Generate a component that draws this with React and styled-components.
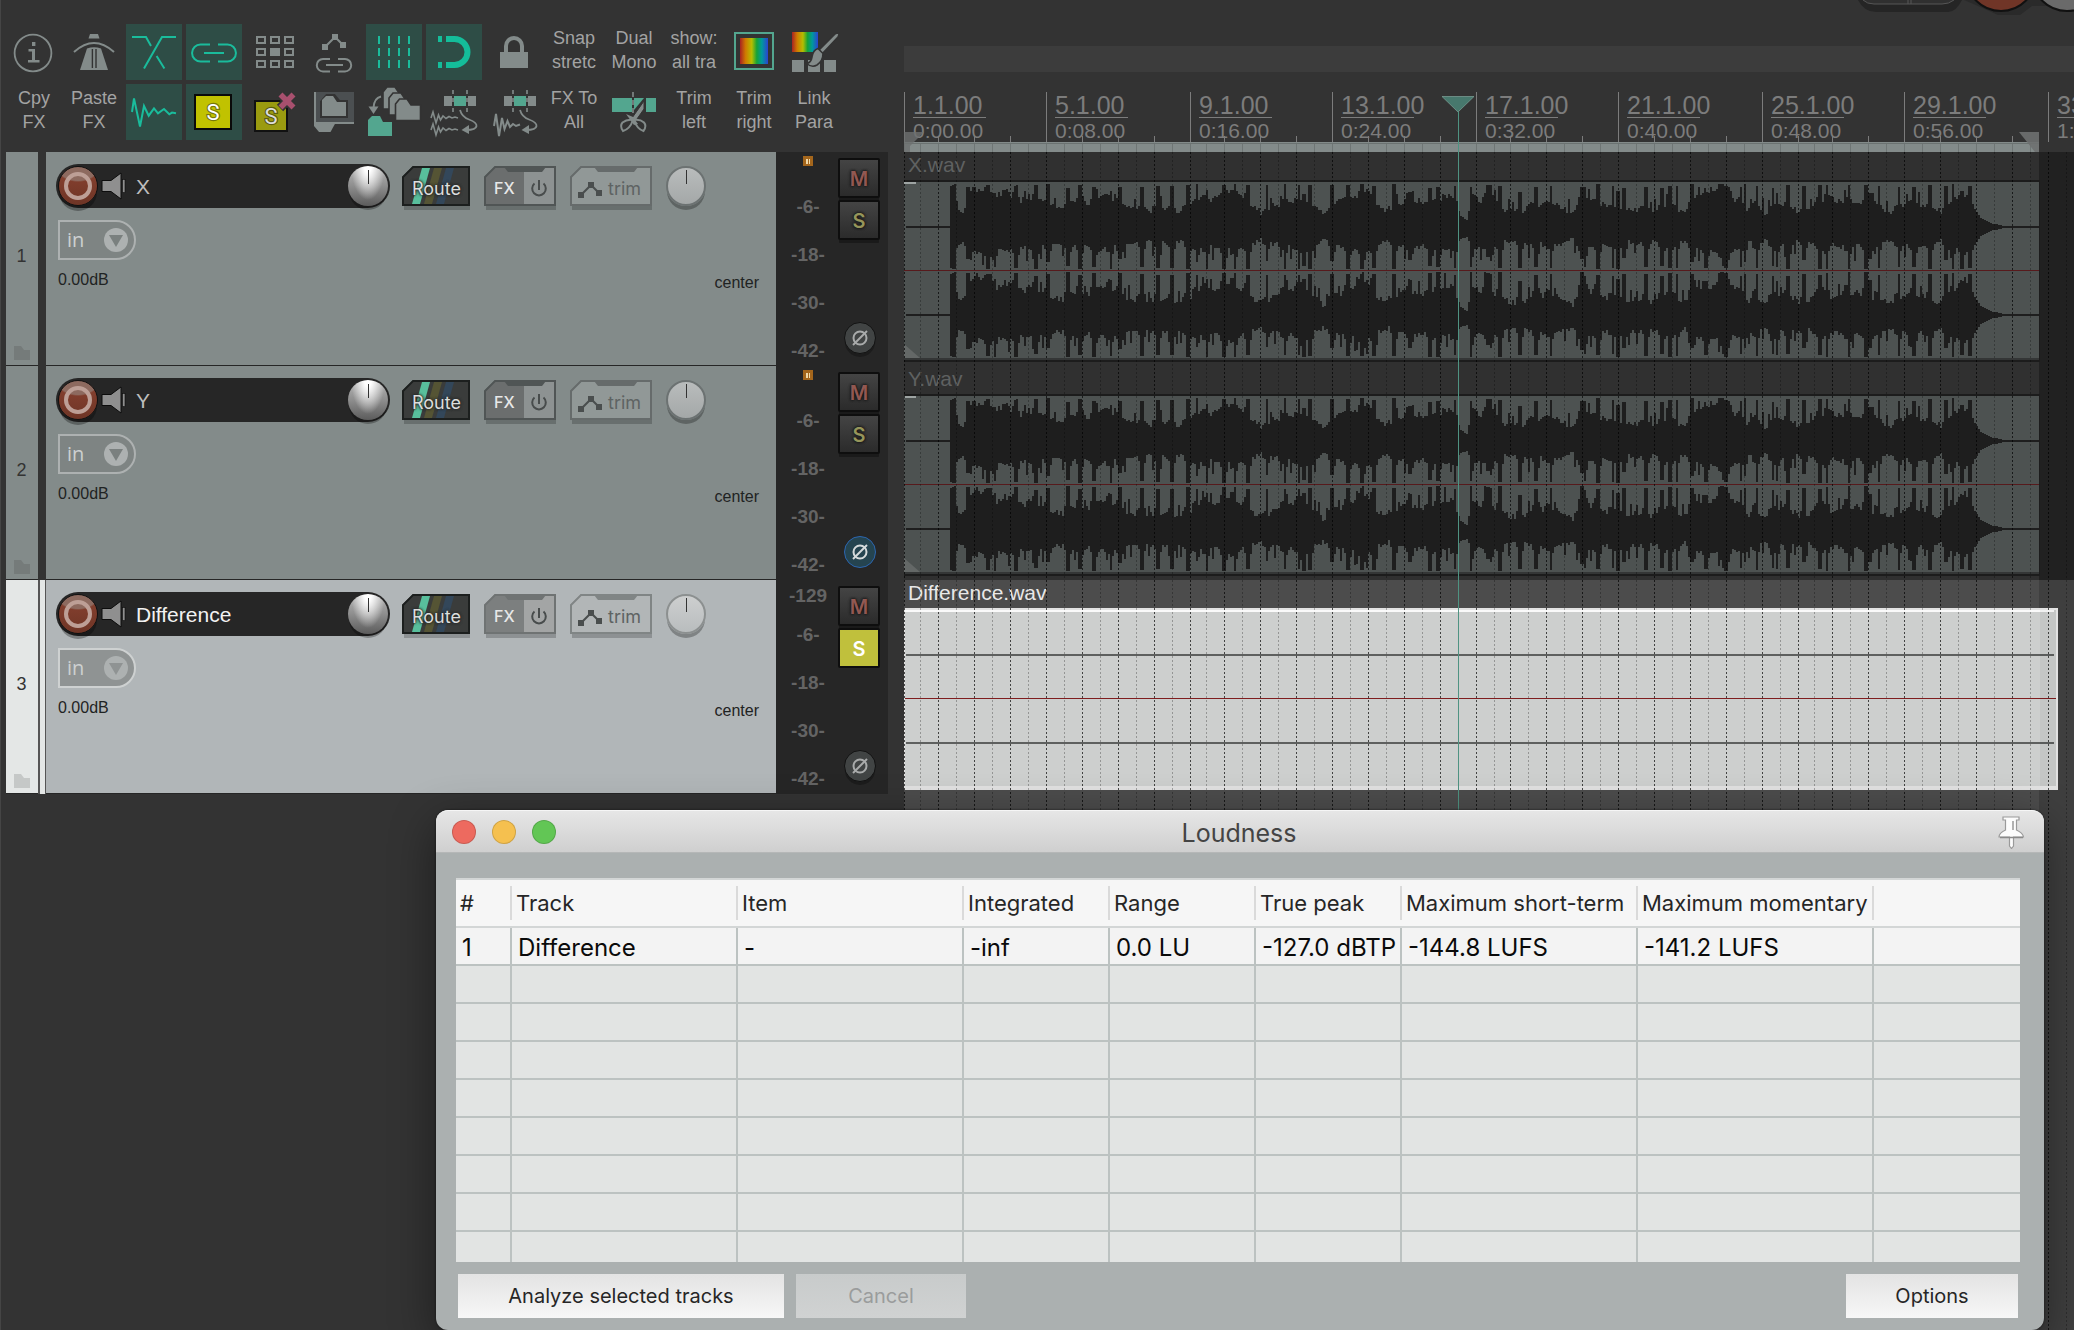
import React from "react";
import styled, { createGlobalStyle, css } from "styled-components";

const GlobalStyle = createGlobalStyle`
  * { box-sizing: border-box; }
  body { margin: 0; background: #333; }
  button, input, select { font: inherit; margin: 0; padding: 0; border: 0; background: none; color: inherit; }
  svg { display: block; }
`;

const SANS = `"Liberation Sans", Arial, sans-serif`;
const UI = `Inter, Roboto, sans-serif`;
const GRAY = "#838b8a";
const GREEN = "#53a68f";
const TEAL = "#1abc9c";
const BEAT = 17.88;
const LOOP_END = 1135;

/* ---------- shell ---------- */

const Page = styled.div`
  position: relative;
  display: flex;
  min-height: 100vh;
  overflow: hidden;
  background: #333;
  border-left: 1px solid #454545;
  font-family: ${SANS};
`;

const ControlPane = styled.div`
  flex: none;
  width: 903px;
`;

const ArrangePane = styled.div`
  position: relative;
  flex: 1;
  min-width: 0;
  display: flex;
  flex-direction: column;
  overflow: hidden;
`;

/* ---------- toolbar ---------- */

const Toolbar = styled.div`
  display: grid;
  grid-template-columns: repeat(14, 56px);
  gap: 4px;
  height: 152px;
  padding: 24px 0 0 5px;
  align-content: start;
`;

const ToolButton = styled.button`
  height: 56px;
  background: ${(p) => (p.$on ? "#2e4d46" : "transparent")};
  color: #a3a3a3;
  font-size: 18px;
  line-height: 24px;
  text-align: center;
  white-space: pre;
  ${(p) => p.$text && css`padding-bottom: 4px;`}
`;

const Icon = ({ children }) => (
  <svg width="56" height="56" viewBox="0 0 56 56" fill="none" stroke={GRAY} strokeWidth="2">
    {children}
  </svg>
);

const Rainbow = ({ id }) => (
  <linearGradient id={id}>
    <stop offset="0" stopColor="#a82222" />
    <stop offset=".2" stopColor="#cf7a00" />
    <stop offset=".42" stopColor="#b5bd00" />
    <stop offset=".6" stopColor="#14a238" />
    <stop offset=".78" stopColor="#009a9c" />
    <stop offset="1" stopColor="#2b43d0" />
  </linearGradient>
);

const InfoIcon = () => (
  <Icon>
    <circle cx="27" cy="29" r="18.4" strokeWidth="1.8" />
    <g fill={GRAY} stroke="none">
      <rect x="26" y="18" width="3.4" height="4" />
      <path d="M22.5 25H29V36H33.5V38.4H22V36H26V27.4H22.5Z" />
    </g>
  </Icon>
);
const MetronomeIcon = () => (
  <Icon>
    <path d="M24 10h8l1.5 4.4h-11Z" fill={GRAY} stroke="none" />
    <path d="M8 28Q28 10 48 28" />
    <path d="M21 24.5Q28 22 35 24.5L42 46H14Z" fill={GRAY} stroke="none" />
    <path d="M26.4 25V44M30 25V44" stroke="#333" strokeWidth="1.4" />
  </Icon>
);
const CrossfadeIcon = () => (
  <Icon>
    <path d="M6 13H20L25 22M50 13H36L18 44.5M30.6 32L38.4 44.5" stroke={TEAL} />
  </Icon>
);
const LinkIcon = () => (
  <Icon>
    <path d="M24 20.5H14.5A8.4 8.4 0 0 0 14.5 37.4H24M32 20.5H41.5A8.4 8.4 0 0 1 41.5 37.4H32M18 29H38" stroke={TEAL} />
  </Icon>
);
const MatrixIcon = () => (
  <Icon>
    {[12, 24, 36].map((y) =>
      [10, 24, 38].map((x) => (
        <rect key={`${x}-${y}`} x={x + 1} y={y + 1} width="8" height="6" fill={x === 24 && y === 24 ? GRAY : "none"} />
      ))
    )}
  </Icon>
);
const EnvelopeLinkIcon = () => (
  <Icon>
    <path d="M19 23L29 13L37 21" />
    <g fill={GRAY} stroke="none">
      <rect x="26" y="10" width="6" height="6" />
      <rect x="16" y="20" width="6" height="6" />
      <rect x="34" y="18" width="6" height="6" />
    </g>
    <path d="M24 35H17A6 6 0 0 0 17 47.4H24M32 35H39A6 6 0 0 1 39 47.4H32M20 41H37" />
  </Icon>
);
const GridIcon = () => (
  <Icon>
    {[13, 23, 33, 43].map((x) => (
      <path key={x} d={`M${x} 12v8m0 4v8m0 4v8`} stroke={TEAL} />
    ))}
  </Icon>
);
const MagnetIcon = () => (
  <Icon>
    <path d="M20 15H28.5A13 13 0 0 1 28.5 41H20M12 15h4M12 41h4" stroke="#14bd9a" strokeWidth="6" />
  </Icon>
);
const LockIcon = () => (
  <Icon>
    <rect x="14" y="28" width="28" height="16" fill={GRAY} stroke="none" />
    <path d="M20 28V22A8 8 0 0 1 36 22V28" strokeWidth="4" />
  </Icon>
);
const ColorsIcon = () => (
  <Icon>
    <defs><Rainbow id="rb1" /></defs>
    <rect x="9" y="9" width="38" height="36" stroke={GREEN} />
    <rect x="14" y="14" width="28" height="26" fill="url(#rb1)" stroke="none" />
  </Icon>
);
const PaintIcon = () => (
  <Icon>
    <defs><Rainbow id="rb2" /></defs>
    <rect x="6" y="8" width="26" height="20" fill="url(#rb2)" stroke="none" />
    <g fill={GRAY} stroke="none">
      <rect x="6" y="36" width="12" height="12" />
      <rect x="22" y="36" width="12" height="12" />
      <rect x="38" y="36" width="12" height="12" />
      <g stroke="#333" strokeWidth="1.6">
        <path d="M53 9.5Q50 8.5 48 11L33 26L36 30L52 13Q53 11 53 9.5Z" />
        <path d="M32 24.5L37 29.5Q37 37 31 41Q26 44 20.5 39.5Q25 39 26 33Q27 26 32 24.5Z" />
      </g>
    </g>
  </Icon>
);
const WaveIcon = () => (
  <Icon>
    <path d="M6 28L8 14.5L14 42.5L18 22L22.7 31.7L28 24.3L32 29.3L38 25L43.3 30.3L46 28.6L50 29.3" stroke={TEAL} />
  </Icon>
);
const Letter = styled.text`
  font: 22px Roboto, sans-serif;
  text-anchor: middle;
  paint-order: stroke;
`;
const SoloIcon = () => (
  <Icon>
    <rect x="9" y="11" width="36" height="34" fill="#c1c200" stroke="#0a0a0a" />
    <Letter x="27" y="36" fill="#fff" stroke="#77780a" strokeWidth="2.4">S</Letter>
  </Icon>
);
const UnsoloIcon = () => (
  <Icon>
    <rect x="9" y="17" width="32" height="30" fill="#9a9b10" stroke="#111" />
    <Letter x="25" y="40" fill="#ddd" stroke="#5c5d10" strokeWidth="2.4">S</Letter>
    <path d="M34 10L48 24M48 10L34 24" stroke="#333" strokeWidth="9" />
    <path d="M34.500 10.500L47.500 23.500M47.500 10.500L34.500 23.500" stroke="#a8506e" strokeWidth="5.6" />
  </Icon>
);
const ProjectFolderIcon = () => (
  <Icon>
    <rect x="8" y="8" width="40" height="32" fill="#4b4f51" stroke="none" />
    <path d="M9 8V39H48" />
    <path d="M8 38H30L24.500 48H13L8 42Z" fill={GRAY} stroke="none" />
    <path d="M16 18L21 12H28L33 18H40V32H16Z" fill="#333" stroke="#333" strokeWidth="4" />
    <path d="M16 16L20 12H27L31 18H40V32H16Z" fill={GRAY} stroke="none" />
  </Icon>
);
const MoveFolderIcon = () => (
  <Icon>
    <path d="M15 12.500Q8 14 7.500 24" />
    <path d="M2.500 22.500H12.500L7.500 30Z" fill={GRAY} stroke="none" />
    <g fill={GRAY} stroke="#333" strokeWidth="1.600">
      <path d="M17 8L21 3H29L33 9H36V25H17Z" />
      <path d="M23 14L27 9H35L39 15H42V31H23Z" />
      <path d="M29.500 20L33.500 15H41L45 21H54.500V36.500H29.500Z" />
    </g>
    <path d="M2 36L6 32H14L17 38H26V52H2Z" fill={GREEN} stroke="none" />
  </Icon>
);
const GlueTop = () => (
  <>
    <g stroke="none">
      <rect x="18" y="12" width="8" height="10" fill={GRAY} />
      <rect x="28" y="12" width="12" height="10" fill={GREEN} />
      <rect x="42" y="12" width="8" height="10" fill={GRAY} />
    </g>
    <path d="M27 6v4m0 4v4m0 6v4M41 6v4m0 4v4m0 6v4" strokeWidth="1.600" />
    <path d="M34 26Q36 33 43 35.500Q51 38.500 50.500 42Q50 46 40 46" strokeWidth="1.800" />
    <path d="M43 41V50L35.500 46Z" fill={GRAY} stroke="none" />
  </>
);
const MultiWaveIcon = () => (
  <Icon>
    <GlueTop />
    <path d="M5 34L7 28L10 39L12.500 31L14.500 36L17 32L20 34.500L23 32.500L26 34L29 33L32 34" strokeWidth="1.600" />
    <path d="M5 46L7 40L10 51L12.500 43L14.500 48L17 44L20 46.500L23 44.500L26 46L29 45L32 46" strokeWidth="1.600" />
  </Icon>
);
const SingleWaveIcon = () => (
  <Icon>
    <GlueTop />
    <path d="M8 42L10 30L13 52L16 34L18.500 45L21.500 37L24 43L27 40L30 42L34 40.500" />
  </Icon>
);
const ScissorsIcon = () => (
  <Icon>
    <g fill={GREEN} stroke="none">
      <rect x="6" y="14" width="20" height="14" />
      <path d="M28 14H38L28 26Z" />
      <rect x="40" y="14" width="10" height="14" />
    </g>
    <path d="M27 8v5m0 3v5m0 3v5" strokeWidth="1.600" />
    <path d="M38 17L26 34L29.500 37L38 25Z" fill={GRAY} stroke="#333" strokeWidth="1" />
    <path d="M20 30L27 33L32 40L28 41Z" fill={GRAY} stroke="none" />
    <path d="M27 36Q21 35 16.500 38.500Q13.500 42 17 47Q24 45 27 36ZM28 36Q34 35 38 38.500Q41 42 37.500 47Q31 45 28 36Z" />
  </Icon>
);

const TOOLS = [
  { name: "Project info", icon: InfoIcon },
  { name: "Metronome", icon: MetronomeIcon },
  { name: "Crossfade", icon: CrossfadeIcon, on: true },
  { name: "Grouping", icon: LinkIcon, on: true },
  { name: "Matrix", icon: MatrixIcon },
  { name: "Envelope link", icon: EnvelopeLinkIcon },
  { name: "Grid", icon: GridIcon, on: true },
  { name: "Snap", icon: MagnetIcon, on: true },
  { name: "Lock", icon: LockIcon },
  { text: "Snap\nstretc" },
  { text: "Dual\nMono" },
  { text: "show:\nall tra" },
  { name: "Colors", icon: ColorsIcon },
  { name: "Paint", icon: PaintIcon },
  { text: "Cpy\nFX" },
  { text: "Paste\nFX" },
  { name: "Waveform", icon: WaveIcon, on: true },
  { name: "Solo", icon: SoloIcon, on: true },
  { name: "Clear solo", icon: UnsoloIcon },
  { name: "Project folder", icon: ProjectFolderIcon },
  { name: "Move to folder", icon: MoveFolderIcon },
  { name: "Glue multichannel", icon: MultiWaveIcon },
  { name: "Glue", icon: SingleWaveIcon },
  { text: "FX To\nAll" },
  { name: "Split", icon: ScissorsIcon },
  { text: "Trim\nleft" },
  { text: "Trim\nright" },
  { text: "Link\nPara" },
];

/* ---------- track panels ---------- */

const TrackRow = styled.section`
  display: flex;
  height: 214px;
  padding-left: 5px;
`;

const NumberCell = styled.div`
  display: flex;
  flex-direction: column;
  align-items: center;
  justify-content: flex-end;
  gap: 80px;
  width: 32px;
  padding: 0 1px 5px 0;
  background: ${(p) => (p.$selected ? "#e4e7e6" : GRAY)};
  border-bottom: 1px solid #262626;
  color: #333;
  font-size: 18px;
  line-height: 20px;
`;

const Spacer = styled.div`
  width: 8px;
  border: solid #555;
  border-width: 0 1px 0 2px;
  background: #e4e7e6;
  ${(p) => !p.$selected && css`border-color: #333; background: #333;`}
`;

const Panel = styled.div`
  width: 730px;
  padding: 12px 17px 0 10px;
  background: ${(p) => (p.$selected ? "#b1b6b8" : GRAY)};
  border-bottom: 1px solid #262626;
`;

const PanelTop = styled.div`
  display: flex;
  align-items: center;
`;

const NamePill = styled.div`
  display: flex;
  align-items: center;
  width: 334px;
  height: 44px;
  margin-right: 12px;
  padding: 0 2px;
  border-radius: 22px;
  background: #262626;
`;

const RecordButton = styled.button`
  display: grid;
  place-items: center;
  flex: none;
  width: 40px;
  height: 40px;
  border: 1px solid #111;
  border-radius: 50%;
  background: radial-gradient(ellipse 22px 15px at 50% 0, #8d6a5f 0 90%, transparent 100%), linear-gradient(#8a4230, #6e3526);
  box-shadow: 0 6px 0 -1px rgba(0, 0, 0, 0.3);
  &::after {
    content: "";
    width: 20px;
    height: 20px;
    border: 4px solid #bd9f96;
    border-radius: 50%;
  }
`;

const IconButton = styled.button`
  flex: none;
  margin-left: 3px;
`;

const NameInput = styled.input`
  flex: 1;
  min-width: 0;
  height: 36px;
  margin-left: 10px;
  padding-top: 2px;
  outline: 0;
  color: ${(p) => (p.$selected ? "#f2f2f2" : "#bdbdbd")};
  font-size: 21px;
`;

const Knob = styled.input.attrs({ type: "range" })`
  appearance: none;
  flex: none;
  width: 40px;
  height: 40px;
  border-radius: 50%;
  background: linear-gradient(#333, #333) 50% 4px / 1px 14px no-repeat,
    ${(p) =>
      p.$light
        ? "linear-gradient(#b9bcbc, #a4a8a8)"
        : "radial-gradient(ellipse at 50% 0, #fff 0 12%, transparent 60%), linear-gradient(#b8b8b8, #8e8e8e 50%, #5c5c5c)"};
  ${(p) => p.$light && css`
    border: 2px solid #6c7272;
    background-position: 50% 2px, 0 0;
    background-clip: border-box;
  `}
  ${(p) => p.$selected && css`
    border-color: #8c9090;
    background-image: linear-gradient(#333, #333), linear-gradient(#cdcfcf, #b9bdbe);
  `}
  box-shadow: 0 5px 0 -1px rgba(0, 0, 0, 0.28);
  &::-webkit-slider-thumb { appearance: none; opacity: 0; }
`;

const ShapedButton = styled.button`
  position: relative;
  display: flex;
  align-items: center;
  width: ${(p) => p.$w}px;
  height: 40px;
  margin-right: 14px;
  padding-left: ${(p) => p.$pad}px;
  padding-top: 4px;
  color: ${(p) => p.$color};
  font-family: ${UI};
  font-size: ${(p) => p.$size || 18}px;
  font-weight: ${(p) => p.$weight || 400};
  box-shadow: 0 4px 0 rgba(0, 0, 0, 0.2);
  clip-path: polygon(0 10px, 10px 0, 100% 0, 100% 110%, 2px 110%, 2px 100%, 0 100%);
  & > svg { position: absolute; inset: 0; }
  & > span { position: relative; }
`;

const RouteLabel = styled.span`
  text-shadow: 0 0 3px #2a2c2b, 0 0 3px #2a2c2b, 0 0 2px #2a2c2b;
`;

const InputSelect = styled.label`
  position: relative;
  display: block;
  width: 78px;
  height: 40px;
  margin: 12px 0 0 2px;
  border: 2px solid ${(p) => (p.$selected ? "#ced1d1" : "#adb1b1")};
  border-radius: 0 20px 20px 0;
  background: ${(p) => (p.$selected ? "#8f9393" : "#7e8483")};
  select {
    appearance: none;
    width: 100%;
    height: 36px;
    padding: 0 0 2px 7px;
    color: #cdd0d0;
    font-family: "Open Sans", sans-serif;
    font-size: 20px;
    outline: 0;
  }
  svg { position: absolute; top: 6px; right: 6px; pointer-events: none; }
`;

const Readouts = styled.div`
  display: flex;
  justify-content: space-between;
  margin: 11px 0 0 2px;
  color: #1f2323;
  font-size: 16px;
  line-height: 18px;
  span:last-child { padding-top: 3px; }
`;

const MeterStrip = styled.div`
  display: grid;
  grid-template-columns: 64px 48px;
  grid-template-rows: 214px;
  width: 112px;
  background: #262626;
`;

const Scale = styled.ol`
  margin: 0;
  padding: 0;
  list-style: none;
  color: #646464;
  font-size: 19px;
  font-weight: 700;
  line-height: 24px;
  text-align: center;
  li { height: 48px; }
  li:first-child { display: flex; justify-content: center; height: 43px; padding-top: 4px; }
  li:last-child { height: 24px; }
`;

const Clip = styled.i`
  width: 10px;
  height: 10px;
  background: linear-gradient(90deg, transparent 3px, #f0d9a8 3px 5px, transparent 5px 6px, #f0d9a8 6px 7px, transparent 7px) 0 3px / 10px 5px no-repeat #a4661c;
`;

const MeterButtons = styled.div`
  display: flex;
  flex-direction: column;
  align-items: flex-start;
  gap: 2px;
  padding: 6px 0 12px;
  & > button { margin-left: -2px; }
  & > button:last-child { margin: auto 0 0 4px; }
`;

const SquareButton = styled.button`
  width: 42px;
  height: 40px;
  padding-top: 2px;
  border: 2px solid #0e0e0e;
  border-radius: 2px;
  background: ${(p) => (p.$lit ? "#c0c03c" : "linear-gradient(#444, #2b2b2b)")};
  box-shadow: ${(p) => (p.$lit ? "none" : "0 4px 0 -1px #1a1a1a")};
  color: ${(p) => p.$color};
  font-family: ${UI};
  font-size: 20px;
  font-weight: 600;
  text-shadow: ${(p) => (p.$lit ? "none" : "0 0 3px #111, 0 0 3px #111")};
`;

const PhaseButton = styled.button`
  display: grid;
  place-items: center;
  width: 32px;
  height: 32px;
  border: 1px solid ${(p) => (p.$on ? "#2c66b0" : "#121212")};
  border-radius: 50%;
  background: ${(p) => (p.$on ? "#254450" : "#414444")};
  box-shadow: 0 4px 0 -1px ${(p) => (p.$on ? "transparent" : "#1c1c1c")};
`;

const FolderGlyph = ({ selected }) => (
  <svg width="16" height="14" viewBox="0 0 16 14">
    <path d="M0 0H7L10 4H16V14H0Z" fill={selected ? "#c5c8c7" : "#757b7a"} />
  </svg>
);

const SpeakerGlyph = () => (
  <svg width="25" height="28" viewBox="0 0 25 28">
    <path d="M1 8.500H10L20 1V27L10 19.500H1Z" fill="#8f8f8f" stroke="#0c0c0c" />
    <rect x="21.500" y="7.500" width="2.500" height="13" fill="#8f8f8f" stroke="#0c0c0c" strokeWidth=".6" />
  </svg>
);

function Track({ n, name, selected, clip, soloed, phase }) {
  const edge = selected ? "#6f7373" : "#505555";
  return (
    <TrackRow aria-label={`Track ${n}`}>
      <NumberCell $selected={selected}>
        {n}
        <FolderGlyph selected={selected} />
      </NumberCell>
      <Spacer $selected={selected} />
      <Panel $selected={selected}>
        <PanelTop>
          <NamePill>
            <RecordButton aria-label="Record arm" />
            <IconButton aria-label="Monitor"><SpeakerGlyph /></IconButton>
            <NameInput aria-label="Track name" defaultValue={name} $selected={selected} />
            <Knob aria-label="Volume" />
          </NamePill>
          <ShapedButton $w={68} $pad={10} $color="#dcdedd">
            <svg width="68" height="40" viewBox="0 0 68 40">
              <path d="M1 11L11 1H67V39H1Z" fill="#3a3c3b" stroke="#1c1f1e" strokeWidth="2" />
              <path d="M20 2H28L18 38H10Z" fill="#58bf9c" />
              <path d="M32 2H40L30 38H22Z" fill="#555434" />
              <path d="M44 2H52L42 38H34Z" fill="#33475a" />
            </svg>
            <RouteLabel>Route</RouteLabel>
          </ShapedButton>
          <ShapedButton $w={72} $pad={10} $color="#e8e8e8" $weight={500} $size={16}>
            <svg width="72" height="40" viewBox="0 0 72 40">
              <path d="M1 11L11 1H40V39H1Z" fill={selected ? "#7c7f7f" : "#6b6e6e"} />
              <path d="M40 1H71V39H40Z" fill={selected ? "#a3a5a5" : "#8d9292"} />
              <path d="M20 1H62L58 6H24Z" fill={edge} />
              <path d="M1 11L11 1H71V39H1Z" fill="none" stroke={edge} strokeWidth="2" />
              <path d="M50.500 17.500A6.800 6.800 0 1 0 59.500 17.500M55 14V24" fill="none" stroke="#484c4c" strokeWidth="2" />
            </svg>
            <span>FX</span>
          </ShapedButton>
          <ShapedButton $w={82} $pad={38} $color="#5e6363">
            <svg width="82" height="40" viewBox="0 0 82 40">
              <path d="M1 11L11 1H81V39H1Z" fill={selected ? "#b2b6b7" : "#919897"} stroke={selected ? "#808585" : "#666b6b"} strokeWidth="2" />
              <path d="M24 1H68L64 6H28Z" fill={selected ? "#808585" : "#666b6b"} />
              <path d="M11 29L21 19L29 27" fill="none" stroke="#4a4e4e" strokeWidth="2" />
              <path d="M8 26h6v6h-6zM18 16h6v6h-6zM26 24h6v6h-6z" fill="#4a4e4e" />
            </svg>
            <span>trim</span>
          </ShapedButton>
          <Knob aria-label="Pan" $light $selected={selected} />
        </PanelTop>
        <InputSelect $selected={selected}>
          <select aria-label="Input"><option>in</option></select>
          <svg width="24" height="24" viewBox="0 0 24 24">
            <circle cx="12" cy="12" r="12" fill="#adb1b1" />
            <path d="M5 7H19L12 19Z" fill={selected ? "#8f9393" : "#7a807f"} />
          </svg>
        </InputSelect>
        <Readouts>
          <span>0.00dB</span>
          <span>center</span>
        </Readouts>
      </Panel>
      <MeterStrip>
        <Scale>
          <li>{clip ? <Clip /> : "-129"}</li>
          <li>-6-</li>
          <li>-18-</li>
          <li>-30-</li>
          <li>-42-</li>
        </Scale>
        <MeterButtons>
          <SquareButton $color="#925852">M</SquareButton>
          <SquareButton $color={soloed ? "#fff" : "#96955a"} $lit={soloed}>S</SquareButton>
          <PhaseButton aria-label="Phase" $on={phase}>
            <svg width="18" height="18" viewBox="0 0 18 18" fill="none" stroke={phase ? "#d5dadb" : "#a9abab"} strokeWidth="2">
              <circle cx="9" cy="9" r="6.500" />
              <path d="M2 16L16 2" />
            </svg>
          </PhaseButton>
        </MeterButtons>
      </MeterStrip>
    </TrackRow>
  );
}

/* ---------- timeline ---------- */

const Header = styled.div`
  position: relative;
  flex: none;
  height: 92px;
  padding-top: 46px;
`;

const ProjectBar = styled.div`
  height: 26px;
  background: #3c3c3c;
`;

const Transport = styled.svg`
  position: absolute;
  top: 0;
  right: 0;
`;

const Ruler = styled.div`
  position: relative;
  flex: none;
  height: 60px;
`;

const RulerMarks = styled.div`
  display: grid;
  grid-template-columns: repeat(4, 142px 144px) 142px;
`;

const Mark = styled.div`
  height: 50px;
  padding-left: 8px;
  border-left: 1px solid #7c7c7c;
  color: #7c7c7c;
  white-space: nowrap;
  font-size: 21px;
  line-height: 24px;
`;

const Bar = styled.div`
  font-size: 25px;
  line-height: 24px;
  padding-top: 1px;
  &::after {
    content: "";
    display: block;
    width: 73px;
    height: 1px;
    margin-bottom: 1px;
    background: #7c7c7c;
  }
`;

const Overlay = styled.svg`
  position: absolute;
  top: 0;
  left: 0;
  width: 100%;
  height: 100%;
  pointer-events: none;
`;

const Lanes = styled.div`
  position: relative;
  flex: 1;
  display: flex;
  flex-direction: column;
  background: linear-gradient(90deg, #4c4c4c ${LOOP_END}px, #3f3f3f ${LOOP_END}px);
`;

const Lane = styled.div`
  flex: none;
  height: 214px;
  ${(p) => !p.$selected && css`background: linear-gradient(90deg, #303030 ${LOOP_END}px, #212121 ${LOOP_END}px);`}
`;

const ItemLabel = styled.div`
  height: 28px;
  padding-left: 4px;
  color: ${(p) => (p.$selected ? "#e8e8e8" : "#5f6161")};
  font-size: 21px;
  line-height: 26px;
`;

const Item = styled.div`
  width: ${LOOP_END + 1}px;
  height: 182px;
  border: solid #1c1c1c;
  border-width: 2px 1px 2px 0;
  background: linear-gradient(#4d5251 176px, #343636 176px);
`;

const SelectedItem = styled.div`
  width: 1154px;
  height: 182px;
  border: 2px solid #e2e2e2;
  border-bottom-width: 4px;
  border-left-width: 1px;
  background: #cdcfce;
`;

const HITS = [48, 63, 83, 90, 111, 131, 143, 163, 175, 189, 206, 215, 237, 253, 267, 283, 292, 302, 319, 330, 343, 362, 380, 394, 399, 405, 427, 443, 457, 469, 489, 505, 525, 533, 550, 566, 586, 595, 615, 631, 646, 677, 680, 693, 708, 713, 719, 741, 757, 765, 772, 787, 801, 818, 821, 836, 840, 852, 868, 872, 883, 899, 915, 922, 944, 961, 965, 974, 994, 1009, 1025, 1041, 1048, 1057, 1065];
const BODY = [
  [45, 1], [46, 41], [50, 43], [53, 22], [60, 17], [63, 41], [80, 38], [90, 30], [100, 37], [116, 28], [125, 32], [145, 22], [158, 20],
  [170, 27], [185, 25], [195, 33], [210, 28], [222, 22], [240, 18], [260, 20], [272, 17], [285, 22], [296, 31], [310, 26], [320, 36],
  [332, 34], [345, 24], [358, 14], [368, 22], [385, 28], [400, 24], [412, 20], [420, 13], [432, 25], [450, 31], [461, 40], [470, 24],
  [485, 14], [495, 25], [510, 29], [525, 22], [540, 34], [552, 24], [555, 13], [563, 7], [566, 36], [575, 26], [583, 42], [590, 26],
  [600, 18], [615, 16], [625, 22], [640, 24], [655, 22], [668, 14], [677, 35], [690, 26], [700, 22], [715, 16], [725, 20], [745, 18],
  [765, 22], [780, 16], [790, 33], [805, 32], [816, 42], [824, 40], [832, 26], [845, 18], [850, 24], [860, 16], [875, 24], [890, 20],
  [900, 14], [910, 24], [925, 22], [940, 28], [955, 26], [975, 20], [985, 16], [1000, 24], [1012, 26], [1025, 20], [1040, 16],
  [1052, 30], [1065, 30], [1069, 20], [1075, 10], [1085, 4], [1096, 2], [1098, 1], [1136, 1],
];

const noise = (n) => {
  const v = Math.sin(n * 12.9898) * 43758.5453;
  return v - Math.floor(v);
};

const bodyAt = (x) => {
  if (x < 45) return 1;
  const i = Math.max(1, BODY.findIndex(([bx]) => bx >= x));
  const [x0, a0] = BODY[i - 1];
  const [x1, a1] = BODY[i];
  return a0 + ((a1 - a0) * (x - x0)) / (x1 - x0);
};

function channelPath(mid, seed, lift) {
  const top = [];
  const bottom = [];
  for (let x = 2; x < LOOP_END; x += 2) {
    const base = bodyAt(x);
    const loud = x > 50 && x < 1068;
    let up = base;
    let down = base;
    if (loud) {
      up = base - lift;
      down = 6 + base * 0.5;
    }
    if (loud && !(x > 553 && x < 566)) {
      up += (noise(x + seed) - 0.5) * 7;
      down += (noise(x * 3 + seed) - 0.5) * 5;
      if (noise(x * 7 + seed) > 0.9) up += 9;
      if (noise(x * 11 + seed) > 0.92) down += 12;
      HITS.forEach((h, i) => {
        const d = x - h;
        const reach = 39 + noise(h + seed) * 4;
        if (d > -2 && d <= 1) {
          up = Math.max(up, i % 7 === 3 ? reach - 6 : reach);
          down = Math.max(down, i % 5 === 1 ? reach - 8 : reach);
        } else if (d > 1 && d <= 3) {
          down = Math.max(down, base * 0.5 + 13);
        } else if (d >= -4 && d <= -2) {
          up = Math.max(up, base + 2);
          down = Math.max(down, base * 0.5 + 10);
        }
      });
    }
    up = Math.min(43, Math.round(up));
    down = Math.min(42, Math.round(down));
    top.push(`L${x} ${mid - up}H${x + 2}`);
    bottom.unshift(`L${x + 2} ${mid + down}H${x}`);
  }
  return `M2 ${mid}${top.join("")}${bottom.join("")}Z`;
}

const WAVE_TOP = channelPath(45, 7, 1);
const WAVE_BOTTOM = channelPath(133, 31, 4);

const Waveform = () => (
  <svg width={LOOP_END} height="178" viewBox={`0 0 ${LOOP_END} 178`}>
    <path d={WAVE_TOP} fill="#1e1e1e" />
    <path d={WAVE_BOTTOM} fill="#1e1e1e" />
    <path d={`M0 88.500H${LOOP_END}`} stroke="#571a1c" />
    <path d="M0 1H12" stroke="#9ea4a3" strokeWidth="2" />
    <path d="M0 162L16 176H0Z" fill="#646867" />
  </svg>
);

const FlatWave = () => (
  <svg width="1151" height="176" viewBox="0 0 1151 176">
    <path d="M0 1H1149" stroke="#fafafa" strokeWidth="2" />
    <path d="M1 45H1149M1 133H1149" stroke="#5e605f" strokeWidth="2" />
    <path d="M0 88.500H1151" stroke="#7f1d1f" />
    <path d={`M${LOOP_END} 0H1151V176H${LOOP_END}Z`} fill="#000" opacity=".04" />
  </svg>
);

const beatX = (k) => 2 * Math.floor((k * BEAT) / 2) + 0.5;

const RulerTicks = () => (
  <Overlay>
    <rect x="0" y="50" width={LOOP_END} height="10" fill="#838b8a" />
    <rect x="0" y="51" width={LOOP_END} height="1" fill="#6b7271" />
    {Array.from({ length: 65 }, (_, k) => {
      const x = beatX(k);
      return (
        <React.Fragment key={k}>
          {k % 2 === 0 && <path d={`M${x} 44V50`} stroke="#7c7c7c" />}
          {x < LOOP_END && <path d={`M${x} 52V60`} stroke="#6f7675" />}
        </React.Fragment>
      );
    })}
    <path d="M0 40H20L6 54V60H0Z" fill="#6e7070" opacity=".8" />
    <path d="M1115 40H1135V60H1131Z" fill="#6e7070" opacity=".9" />
  </Overlay>
);

const GridLines = () => (
  <Overlay>
    {Array.from({ length: 120 }, (_, k) => (
      <line
        key={k}
        x1={beatX(k)}
        x2={beatX(k)}
        y1="0"
        y2="100%"
        stroke="#000"
        strokeOpacity={k % 2 ? 0.28 : 0.68}
        strokeDasharray="2 2"
      />
    ))}
  </Overlay>
);

const Playhead = styled.svg`
  position: absolute;
  top: 96px;
  left: 537px;
`;

/* ---------- loudness window ---------- */

const Window = styled.section`
  position: absolute;
  top: 810px;
  left: 435px;
  right: 30px;
  border-radius: 12px;
  background: #abb0b0;
  box-shadow: 0 0 2px #111, 0 14px 46px rgba(0, 0, 0, 0.45);
  color: #262626;
  font-family: ${UI};
`;

const TitleBar = styled.header`
  display: grid;
  grid-template-columns: 1fr auto 1fr;
  align-items: center;
  height: 43px;
  padding: 0 18px 0 16px;
  border-radius: 12px 12px 0 0;
  border-top: 1px solid #f6f6f6;
  border-bottom: 1px solid #b5b7b7;
  background: linear-gradient(#e6e6e6, #cfcfcf);
`;

const Lights = styled.div`
  display: flex;
  gap: 16px;
`;

const Light = styled.button`
  width: 24px;
  height: 24px;
  border: 1px solid rgba(0, 0, 0, 0.15);
  border-radius: 50%;
  background: ${(p) => p.$color};
`;

const Title = styled.h1`
  margin: 0;
  color: #444;
  font-size: 25px;
  font-weight: 400;
  padding-top: 2px;
`;

const PinButton = styled.button`
  justify-self: end;
`;

const WindowBody = styled.div`
  padding: 25px 24px 12px 20px;
`;

const Table = styled.table`
  width: 100%;
  table-layout: fixed;
  border-collapse: separate;
  border-spacing: 0;
  th, td {
    padding: 0 0 0 4px;
    text-align: left;
    white-space: nowrap;
    font-weight: 400;
  }
  th {
    height: 50px;
    border-top: 2px solid #d3d6d6;
    border-bottom: 2px solid #d3d6d6;
    background: linear-gradient(#dadada, #dadada) right 6px / 2px 34px no-repeat #f6f6f6;
    font-size: 22px;
  }
  th:last-child { background: #f6f6f6; }
  td {
    height: 38px;
    padding: 4px 0 0 6px;
    border: solid #bcc2c1;
    border-width: 0 2px 2px 0;
    background: #e2e4e3;
    color: #0a0a0a;
    font-size: 24px;
    line-height: 32px;
  }
  td:last-child { border-right: 0; }
  tbody tr:first-child td { background: #f3f3f3; }
  tbody tr:last-child td { height: 30px; border-bottom: 0; }
`;

const Actions = styled.div`
  display: flex;
  gap: 12px;
  padding: 12px 2px 0;
`;

const ActionButton = styled.button`
  width: ${(p) => p.$w}px;
  height: 44px;
  background: linear-gradient(#e3e3e3, #f7f7f7);
  font-size: 20px;
  ${(p) => p.$end && css`margin-left: auto;`}
  &:disabled { background: linear-gradient(#c8cbcb, #d0d2d2); color: #9a9c9c; }
`;

const COLUMNS = [
  ["#", 56, "1"],
  ["Track", 226, "Difference"],
  ["Item", 226, "-"],
  ["Integrated", 146, "-inf"],
  ["Range", 146, "0.0 LU"],
  ["True peak", 146, "-127.0 dBTP"],
  ["Maximum short-term", 236, "-144.8 LUFS"],
  ["Maximum momentary", 236, "-141.2 LUFS"],
  ["", null, ""],
];

function LoudnessWindow() {
  return (
    <Window aria-label="Loudness">
      <TitleBar>
        <Lights>
          <Light $color="#ed6a5f" aria-label="Close" />
          <Light $color="#f5c04f" aria-label="Minimize" />
          <Light $color="#62c655" aria-label="Zoom" />
        </Lights>
        <Title>Loudness</Title>
        <PinButton aria-label="Pin">
          <svg width="30" height="34" viewBox="0 0 30 34">
            <path d="M7 2H23V5H20.500V15Q27 18 27.500 22H17.500V31L15.500 33.500L13.500 31V22H3Q3 18 9.500 15V5H7Z" fill="#fcfcfc" stroke="#9a9a9a" strokeWidth="1.200" />
            <path d="M17 6V15" stroke="#999" strokeWidth="1.500" />
            <path d="M4 22.500H27" stroke="#8a8a8a" strokeWidth="1.500" />
          </svg>
        </PinButton>
      </TitleBar>
      <WindowBody>
        <Table>
          <colgroup>
            {COLUMNS.map(([label, width]) => (
              <col key={label} width={width || undefined} />
            ))}
          </colgroup>
          <thead>
            <tr>{COLUMNS.map(([label]) => <th key={label}>{label}</th>)}</tr>
          </thead>
          <tbody>
            <tr>{COLUMNS.map(([label, , value]) => <td key={label}>{value}</td>)}</tr>
            {Array.from({ length: 8 }, (_, r) => (
              <tr key={r}>{COLUMNS.map(([label]) => <td key={label} />)}</tr>
            ))}
          </tbody>
        </Table>
        <Actions>
          <ActionButton $w={326}>Analyze selected tracks</ActionButton>
          <ActionButton $w={170} disabled>Cancel</ActionButton>
          <ActionButton $w={172} $end>Options</ActionButton>
        </Actions>
      </WindowBody>
    </Window>
  );
}

const MARKS = [
  ["1.1.00", "0:00.00"],
  ["5.1.00", "0:08.00"],
  ["9.1.00", "0:16.00"],
  ["13.1.00", "0:24.00"],
  ["17.1.00", "0:32.00"],
  ["21.1.00", "0:40.00"],
  ["25.1.00", "0:48.00"],
  ["29.1.00", "0:56.00"],
  ["33.1.00", "1:04.00"],
];

export default function App() {
  return (
    <>
      <GlobalStyle />
      <Page>
        <ControlPane>
          <Toolbar>
            {TOOLS.map(({ name, text, icon: Glyph, on }) => (
              <ToolButton key={name || text} $on={on} $text={!!text} aria-label={name}>
                {text || <Glyph />}
              </ToolButton>
            ))}
          </Toolbar>
          <Track n={1} name="X" clip />
          <Track n={2} name="Y" clip phase />
          <Track n={3} name="Difference" selected soloed />
        </ControlPane>
        <ArrangePane>
          <Header>
            <Transport width="216" height="18" viewBox="0 0 216 18">
              <path d="M0 0H106L120 6L140 15H162L174 6H216V0Z" fill="#2a2a2a" />
              <path d="M0 0Q6 12 18 12H90Q98 12 104 0Z" fill="#252525" />
              <path d="M5 0Q9 4 16 4H84Q91 4 96 0M50 0V4M53 0V4" fill="#303030" stroke="#565656" />
              <circle cx="143" cy="-24" r="35" fill="#703527" stroke="#111" strokeWidth="2" />
              <circle cx="209" cy="-24" r="35" fill="#6a6a6a" stroke="#111" strokeWidth="2" />
            </Transport>
            <ProjectBar />
          </Header>
          <Ruler>
            <RulerMarks>
              {MARKS.map(([bar, time]) => (
                <Mark key={bar}><Bar>{bar}</Bar>{time}</Mark>
              ))}
            </RulerMarks>
            <RulerTicks />
          </Ruler>
          <Lanes>
            <Lane>
              <ItemLabel>X.wav</ItemLabel>
              <Item><Waveform /></Item>
            </Lane>
            <Lane>
              <ItemLabel>Y.wav</ItemLabel>
              <Item><Waveform /></Item>
            </Lane>
            <Lane $selected>
              <ItemLabel $selected>Difference.wav</ItemLabel>
              <SelectedItem><FlatWave /></SelectedItem>
            </Lane>
            <GridLines />
          </Lanes>
          <Playhead width="34" height="716" viewBox="0 0 34 716">
            <path d="M1 .500H33L17 16Z" fill="#47786d" stroke="#7fa39a" strokeWidth=".7" />
            <path d="M17.500 16V716" stroke="#4f9382" />
          </Playhead>
        </ArrangePane>
        <LoudnessWindow />
      </Page>
    </>
  );
}
